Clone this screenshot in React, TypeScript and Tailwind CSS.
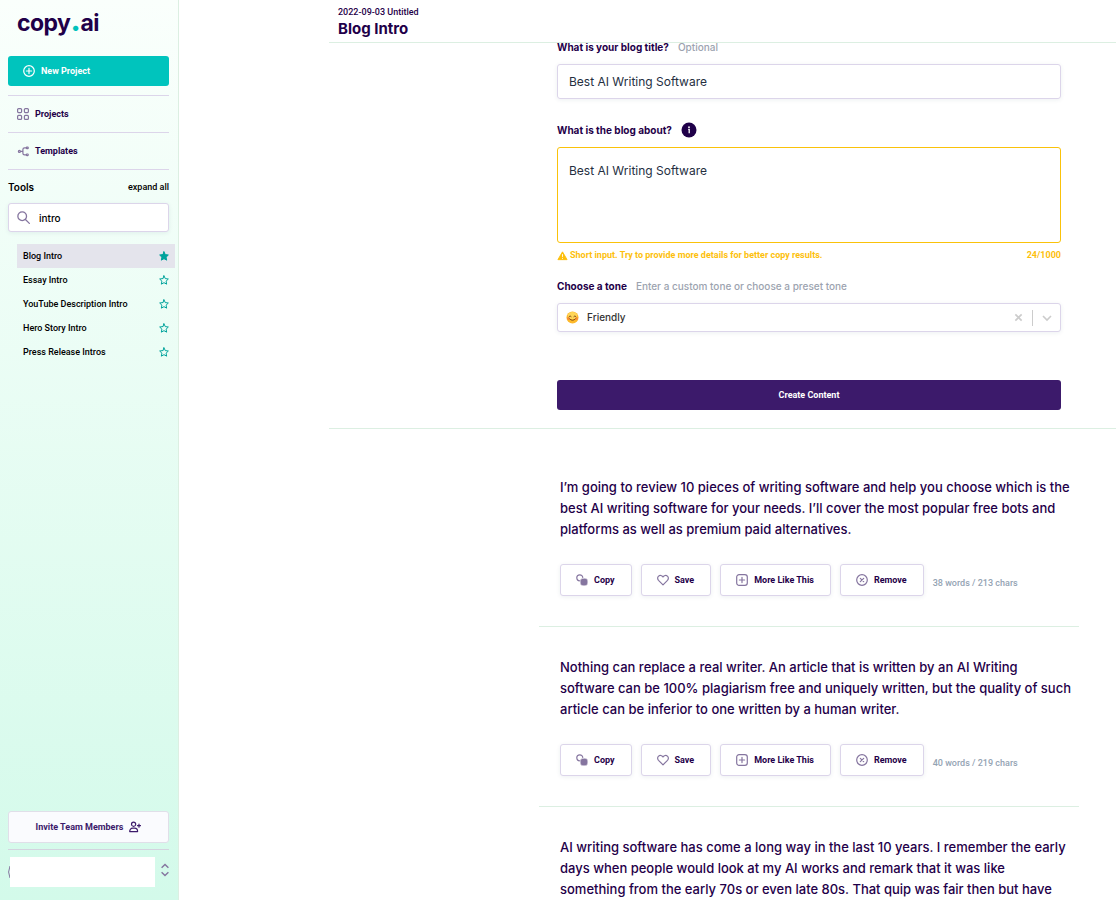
import { useState } from "react";
import type { ReactNode } from "react";

const tools = ["Blog Intro", "Essay Intro", "YouTube Description Intro", "Hero Story Intro", "Press Release Intros"];

const results = [
  {
    text: "I’m going to review 10 pieces of writing software and help you choose which is the best AI writing software for your needs. I’ll cover the most popular free bots and platforms as well as premium paid alternatives.",
    count: "38 words / 213 chars",
  },
  {
    text: "Nothing can replace a real writer. An article that is written by an AI Writing software can be 100% plagiarism free and uniquely written, but the quality of such article can be inferior to one written by a human writer.",
    count: "40 words / 219 chars",
  },
  {
    text: "AI writing software has come a long way in the last 10 years. I remember the early days when people would look at my AI works and remark that it was like something from the early 70s or even late 80s. That quip was fair then but have",
  },
];

const Icon = ({ children, className = "size-3" }: { children: ReactNode; className?: string }) => (
  <svg
    viewBox="0 0 12 12"
    className={`shrink-0 ${className}`}
    fill="none"
    stroke="currentColor"
    strokeWidth="1.2"
    strokeLinecap="round"
    strokeLinejoin="round"
    aria-hidden="true"
  >
    {children}
  </svg>
);

const Star = ({ filled }: { filled: boolean }) => (
  <Icon className="size-[10px] text-[#00a39c]">
    <path
      d="M6 1 7.5 4.3 11.2 4.8 8.5 7.4 9.2 11 6 9.2 2.8 11 3.5 7.4 .8 4.8 4.5 4.3Z"
      fill={filled ? "currentColor" : "none"}
    />
  </Icon>
);

const ActionButton = ({ icon, label }: { icon: ReactNode; label: string }) => (
  <button className="flex h-8 items-center gap-[6px] rounded-[3px] border border-[#dcd5ea] bg-white pl-[15px] pr-4 font-[Roboto,sans-serif] text-[9px] font-bold leading-4 text-[#1f0049] shadow-[0_1px_4px_rgba(30,60,90,0.08)]">
    <span className="text-[#85759f]">{icon}</span>
    {label}
  </button>
);

const Actions = ({ count }: { count: string }) => (
  <div className="mt-6 flex items-center gap-[9px]">
    <ActionButton
      label="Copy"
      icon={
        <Icon>
          <circle cx="3.8" cy="3.8" r="3" />
          <rect x="4.2" y="4.2" width="7.6" height="7.6" rx="2.8" fill="currentColor" stroke="#fff" strokeWidth="0.5" />
        </Icon>
      }
    />
    <ActionButton
      label="Save"
      icon={
        <Icon>
          <path d="M6 10.8 1.5 6.3C.3 5 .4 3.1 1.6 2.1 2.9 1 4.9 1.3 6 3 7.1 1.3 9.1 1 10.4 2.1 11.6 3.1 11.7 5 10.5 6.3Z" />
        </Icon>
      }
    />
    <ActionButton
      label="More Like This"
      icon={
        <Icon>
          <rect x="0.7" y="0.7" width="10.6" height="10.6" rx="2.4" />
          <path d="M6 3.4v5.2M3.4 6h5.2" />
        </Icon>
      }
    />
    <ActionButton
      label="Remove"
      icon={
        <Icon>
          <circle cx="6" cy="6" r="5.3" />
          <path d="m4.3 4.3 3.4 3.4M7.7 4.3 4.3 7.7" />
        </Icon>
      }
    />
    <span className="pt-[6px] font-[Roboto,sans-serif] text-[9px] font-medium leading-4 text-[#94a3b3]">{count}</span>
  </div>
);

const Sidebar = () => {
  const [query, setQuery] = useState("intro");

  return (
    <aside className="flex w-[179px] shrink-0 flex-col border-r border-[#dcefe2] bg-linear-to-b from-[#fafffc] to-[#d3faea] pb-[13px] pl-2 font-[Roboto,sans-serif] text-[9px] leading-4 text-[#1f0049]">
      <a href="#" className="ml-[9px] mt-1 h-9 font-[Inter,sans-serif] text-[23px] font-bold leading-9 tracking-tight">
        copy<span className="text-[32px] leading-none text-[#00c2bc]">.</span>ai
      </a>
      <div className="mr-[9px] mt-4">
        <button className="flex h-[30px] w-full items-center gap-[6px] rounded-[3px] bg-[#00c4bd] px-[15px] font-bold text-white">
          <Icon>
            <circle cx="6" cy="6" r="5.3" />
            <path d="M6 3.4v5.2M3.4 6h5.2" />
          </Icon>
          New Project
        </button>
        <nav className="mt-[9px] font-bold">
          <a href="#" className="flex h-[37px] items-center gap-[6px] border-t border-[#dcd5ea] pl-[9px]">
            <Icon className="size-3 text-[#85759f]">
              <rect x="0.6" y="0.6" width="4" height="4" rx="1" />
              <rect x="7.4" y="0.6" width="4" height="4" rx="1" />
              <rect x="0.6" y="7.4" width="4" height="4" rx="1" />
              <rect x="7.4" y="7.4" width="4" height="4" rx="1" />
            </Icon>
            Projects
          </a>
          <a href="#" className="flex h-[38px] items-center gap-[6px] border-y border-[#dcd5ea] pl-[9px]">
            <Icon className="size-3 text-[#85759f]">
              <circle cx="2.4" cy="6.4" r="1" />
              <path d="M3.6 6.4h2.2M9.2 2.9H7.6q-1.7 0-1.7 1.7v3.6q0 1.7 1.7 1.7h1.6" />
              <rect x="9.4" y="2.1" width="1.8" height="1.6" rx="0.5" />
              <rect x="9.4" y="9" width="1.8" height="1.6" rx="0.5" />
            </Icon>
            Templates
          </a>
        </nav>
        <div className="mt-2 flex h-[17px] items-center justify-between text-black">
          <h2 className="font-[Inter,sans-serif] text-[10px] font-semibold">Tools</h2>
          <button className="font-medium">expand all</button>
        </div>
        <label className="mt-2 flex h-[29px] items-center gap-[9px] rounded-[3px] border border-[#dcd5ea] bg-white pl-2 shadow-[0_1px_4px_rgba(30,60,90,0.08)]">
          <Icon className="size-[13px] text-[#85759f]">
            <circle cx="4.8" cy="4.8" r="4" />
            <path d="m7.8 7.8 3.6 3.6" />
          </Icon>
          <input
            aria-label="Search tools"
            value={query}
            onChange={(e) => setQuery(e.target.value)}
            className="w-full min-w-0 font-[Inter,sans-serif] text-[10px] font-medium text-black outline-none"
          />
        </label>
      </div>
      <ul className="ml-[9px] mr-[3px] mt-3 font-medium text-black">
        {tools.map((tool, i) => (
          <li key={tool} className={`flex h-6 items-center justify-between px-[6px] ${i === 0 ? "bg-[#e4e4ec]" : ""}`}>
            <a href="#">{tool}</a>
            <button aria-label={`Favorite ${tool}`}>
              <Star filled={i === 0} />
            </button>
          </li>
        ))}
      </ul>
      <div className="mr-[9px] mt-auto">
        <button className="flex h-8 w-full items-center justify-center gap-[6px] rounded-[3px] border border-[#e0dfe9] bg-[#fafbfe] font-bold text-[#3c1a6b]">
          Invite Team Members
          <Icon>
            <circle cx="4.6" cy="3.2" r="2.1" />
            <path d="M.7 10.6c0-2.2 1.2-3.4 3-3.4h1.9c1.8 0 3 1.2 3 3.4ZM10 3.2v3M8.5 4.7h3" />
          </Icon>
        </button>
        <div className="mt-[6px] flex items-center justify-between border-t border-[#d3d3df] pt-[7px]">
          <div className="flex items-center">
            <svg viewBox="0 0 2 14" className="h-[14px] w-[2px]" aria-hidden="true">
              <path d="M2 1Q-.8 7 2 13" fill="none" stroke="#85759f" />
            </svg>
            <div className="h-[30px] w-[145px] bg-white" />
          </div>
          <button aria-label="Switch workspace" className="text-[#85759f]">
            <svg viewBox="0 0 8 14" className="mb-1 h-[14px] w-2" fill="none" stroke="currentColor" strokeWidth="1.4">
              <path d="M.6 4.8 4 1.4l3.4 3.4M.6 9.2 4 12.6l3.4-3.4" />
            </svg>
          </button>
        </div>
      </div>
    </aside>
  );
};

const BlogForm = () => {
  const [title, setTitle] = useState("Best AI Writing Software");
  const [about, setAbout] = useState("Best AI Writing Software");

  return (
    <form className="ml-auto mr-[55px] w-full max-w-[504px] pb-[18px] text-[10px]" onSubmit={(e) => e.preventDefault()}>
      <div className="flex h-4 items-center gap-[9px]">
        <label htmlFor="title" className="font-bold">
          What is your blog title?
        </label>
        <span className="font-medium text-[#9ca3af]">Optional</span>
      </div>
      <input
        id="title"
        value={title}
        onChange={(e) => setTitle(e.target.value)}
        className="mt-[9px] h-[35px] w-full rounded-[3px] border border-[#dcd5ea] px-[11px] text-[12px] text-[#252f3f] shadow-[0_1px_4px_rgba(30,60,90,0.08)] outline-none"
      />
      <div className="mt-[23px] flex h-4 items-center gap-[9px]">
        <label htmlFor="about" className="font-bold">
          What is the blog about?
        </label>
        <svg viewBox="0 0 16 16" className="size-4" role="img" aria-label="Info">
          <circle cx="8" cy="8" r="7.5" fill="#1f0049" />
          <circle cx="8" cy="5.2" r="0.9" fill="#fff" />
          <path d="M7.2 7.4H8.2v3.8" fill="none" stroke="#fff" strokeWidth="1.3" />
        </svg>
      </div>
      <textarea
        id="about"
        value={about}
        onChange={(e) => setAbout(e.target.value)}
        className="mt-[9px] block h-24 w-full resize-none rounded-[3px] border border-[#fac20a] px-[11px] py-[14px] text-[12px] leading-[18px] text-[#252f3f] outline-none"
      />
      <div className="mt-1 flex h-4 items-center justify-between font-[Roboto,sans-serif] text-[9px] font-bold leading-4 text-[#fdbf0d]">
        <p className="flex items-center gap-[2px]">
          <svg viewBox="0 0 12 12" className="size-[11px]" aria-hidden="true">
            <path d="M6 2 11 10.5H1Z" fill="currentColor" stroke="currentColor" strokeLinejoin="round" />
            <path d="M6 4.5v3M6 8.6v1" stroke="#fff" />
          </svg>
          Short input. Try to provide more details for better copy results.
        </p>
        <span>24/1000</span>
      </div>
      <div className="mt-[15px] flex h-4 items-center gap-[9px]">
        <label htmlFor="tone" className="font-bold">
          Choose a tone
        </label>
        <span className="font-medium text-[#9ca3af]">Enter a custom tone or choose a preset tone</span>
      </div>
      <div className="relative mt-[9px]">
        <select
          id="tone"
          className="block h-[29px] w-full appearance-none rounded-[3px] border border-[#dcd5ea] bg-white pl-[29px] text-[10px] font-medium text-[#333] shadow-[0_1px_4px_rgba(30,60,90,0.08)] outline-none"
        >
          <option>Friendly</option>
        </select>
        <svg viewBox="0 0 14 14" className="pointer-events-none absolute left-[9px] top-2 size-[13px]" aria-hidden="true">
          <circle cx="7" cy="7" r="6.5" fill="#fdb92b" />
          <ellipse cx="7" cy="5" rx="5" ry="4" fill="#ffd657" />
          <circle cx="2.6" cy="8.2" r="1.5" fill="#f98b35" />
          <circle cx="11.4" cy="8.2" r="1.5" fill="#f98b35" />
          <path d="M3.2 6q1.2-1.8 2.4 0M8.4 6q1.2-1.8 2.4 0M4 8.6q3 3 6 0" fill="none" stroke="#7a4514" strokeLinecap="round" />
        </svg>
        <div className="absolute inset-y-0 right-[9px] flex items-center gap-[9px] text-[#ccc]">
          <button type="button" aria-label="Clear tone">
            <svg viewBox="0 0 10 10" className="size-[9px]" fill="none" stroke="currentColor" strokeWidth="1.8">
              <path d="m1.5 1.5 7 7M8.5 1.5l-7 7" />
            </svg>
          </button>
          <span className="h-4 w-px bg-[#ccc]" />
          <svg viewBox="0 0 10 10" className="size-[10px]" fill="none" stroke="currentColor" strokeWidth="1.6" aria-hidden="true">
            <path d="m1 3 4 4 4-4" />
          </svg>
        </div>
      </div>
      <button className="mt-12 h-[30px] w-full rounded-[3px] bg-[#3c1a6b] font-[Roboto,sans-serif] text-[9px] font-bold leading-4 text-white">
        Create Content
      </button>
    </form>
  );
};

const App = () => {
  return (
    <div className="flex h-screen overflow-hidden bg-white font-[Inter,sans-serif] text-[#1f0049]">
      <Sidebar />
      <main className="ml-[150px] min-w-0 flex-1">
        <header className="relative z-10 h-[43px] border-b border-[#dcefe2] bg-white pl-[9px] pt-[5px]">
          <p className="font-[Roboto,sans-serif] text-[9px] font-medium leading-[14px]">2022-09-03 Untitled</p>
          <h1 className="text-[15px] font-bold leading-5">Blog Intro</h1>
        </header>
        <div className="-mt-1 border-b border-[#dcefe2]">
          <BlogForm />
        </div>
        <div className="ml-auto mr-[37px] max-w-[540px] pt-[18px]">
          {results.map((result) => (
            <article key={result.text} className="border-b border-[#dcefe2] py-[30px] pl-[21px] pr-[6px]">
              <p className="text-[13px] font-medium leading-[21px]">{result.text}</p>
              {result.count && <Actions count={result.count} />}
            </article>
          ))}
        </div>
      </main>
    </div>
  );
};

export default App;
